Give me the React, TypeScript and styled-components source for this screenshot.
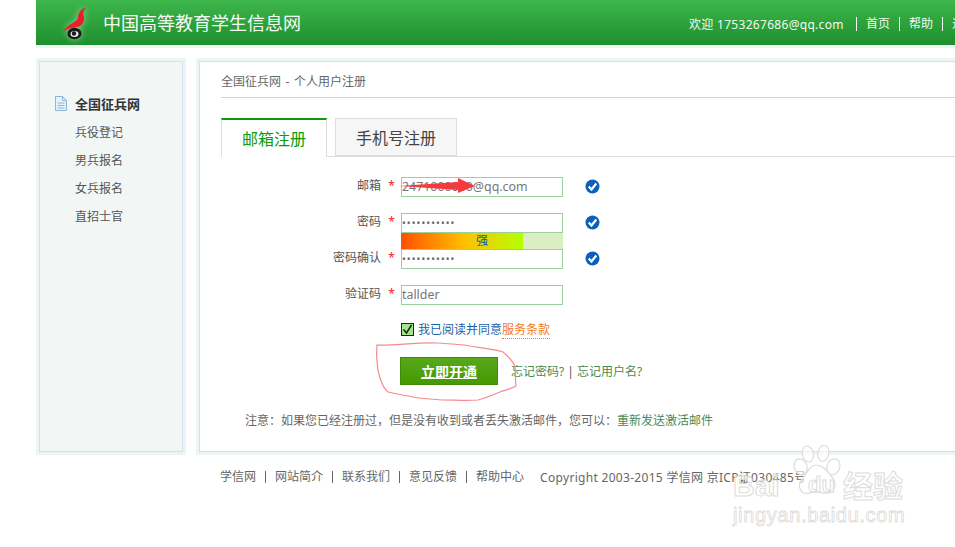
import React from "react";
import styled, { createGlobalStyle } from "styled-components";

const cjk = `"Noto Sans", "Noto Sans CJK SC", sans-serif`;

const Global = createGlobalStyle`
  html, body { margin: 0; padding: 0; background: #fff; overflow: hidden; width: 955px; height: 547px; }
  body { font-family: ${cjk}; font-size: 12px; color: #555; }
  * { box-sizing: border-box; }
`;

const Page = styled.div`
  position: relative;
  width: 955px;
  height: 547px;
  overflow: hidden;
`;
const Wrap = styled.div`
  width: 1040px;
  margin-left: 36px;
  display: flex;
  flex-direction: column;
`;
const Header = styled.header`
  height: 48px;
  border-bottom: 3px solid #eff6f3;
  background: linear-gradient(#3db64c, #1e8f2d);
  display: flex;
  align-items: center;
  padding-left: 25px;
  color: #fff;
`;
const Logo = styled.svg`
  width: 28px;
  height: 34px;
  flex: none;
  filter: drop-shadow(0 0 3px rgba(255, 255, 255, 0.5));
`;
const SiteName = styled.div`
  font-size: 18px;
  line-height: 24px;
  margin-left: 14px;
  padding-top: 1px;
  width: 586px;
  flex: none;
  color: #f4fbf4;
`;
const UserNav = styled.nav`
  display: flex;
  align-items: center;
  padding-top: 3px;
  font-size: 12px;
  white-space: nowrap;
  color: #f2faf2;
`;
const Welcome = styled.span`
  width: 167px;
  letter-spacing: 0.3px;
  flex: none;
`;
const NavLink = styled.a`
  border-left: 1px solid #f2faf2;
  height: 14px;
  line-height: 14px;
  padding: 0 9px;
  width: 43px;
  flex: none;
`;
const Columns = styled.div`
  display: flex;
  gap: 10px;
  margin-top: 10px;
  height: 397px;
`;
const Side = styled.aside`
  width: 150px;
  flex: none;
  border: 3px solid #edf5f2;
  outline: 1px solid #d6e0ea;
  outline-offset: -4px;
  background: #f2f7f5;
  padding: 32px 0 0 16px;
`;
const SideTitle = styled.div`
  display: flex;
  align-items: center;
  height: 20px;
  font-size: 13px;
  font-weight: 700;
  color: #333;
  gap: 8px;
`;
const SideList = styled.ul`
  list-style: none;
  margin: 6px 0 0 20px;
  padding: 0;
`;
const SideItem = styled.li`
  height: 28px;
  line-height: 28px;
  font-size: 12px;
  color: #555;
`;
const Main = styled.main`
  flex: 1;
  border: 3px solid #edf5f2;
  outline: 1px solid #d6e0ea;
  outline-offset: -4px;
  padding: 10px 0 0 22px;
  background: #fff;
`;
const Crumb = styled.div`
  height: 27px;
  line-height: 21px;
  font-size: 12px;
  word-spacing: 1.5px;
  color: #666;
  border-bottom: 1px solid #c9d8cd;
`;
const Tabs = styled.div`
  display: flex;
  gap: 8px;
  margin-top: 20px;
  height: 39px;
  border-bottom: 1px solid #ddd;
`;
const Tab = styled.div<{ $active?: boolean }>`
  width: ${(p) => (p.$active ? "106px" : "122px")};
  height: ${(p) => (p.$active ? "39px" : "38px")};
  border: 1px solid #ddd;
  border-top: ${(p) => (p.$active ? "2px solid #0a9b0a" : "1px solid #ddd")};
  border-bottom: ${(p) => (p.$active ? "none" : "1px solid #ddd")};
  background: ${(p) => (p.$active ? "#fff" : "#f6f6f6")};
  color: ${(p) => (p.$active ? "#0a9b0a" : "#444")};
  font-size: 16px;
  line-height: 38px;
  text-align: center;
`;
const Form = styled.div`
  margin-top: 20px;
  display: flex;
  flex-direction: column;
  gap: 16px;
`;
const Row = styled.div`
  position: relative;
  display: flex;
  align-items: center;
  height: 20px;
`;
const Label = styled.label`
  width: 160px;
  flex: none;
  padding-bottom: 4px;
  text-align: right;
  font-size: 12px;
  color: #555;
`;
const Star = styled.span`
  width: 20px;
  flex: none;
  padding: 0 0 3px 1px;
  text-align: center;
  color: #f22;
  font-size: 12px;
`;
const Field = styled.input`
  width: 162px;
  height: 20px;
  flex: none;
  border: 1px solid #9ad09c;
  padding: 0 0 2px;
  font-family: ${cjk};
  font-size: 12.4px;
  color: #777;
  background: #fff;
  outline: none;
`;
const Dots = styled(Field)`
  font-size: 10px;
  letter-spacing: 1.1px;
  padding-bottom: 0;
  color: #666;
`;
const Check = styled.svg`
  width: 15px;
  height: 15px;
  margin: 0 0 2px 22px;
  flex: none;
`;
const Strength = styled.div`
  position: absolute;
  left: 180px;
  top: 20px;
  width: 162px;
  height: 16px;
  background:
    linear-gradient(90deg, #ff5000, #ffc000 52%, #b4ff00) left top / 122px 100% no-repeat,
    #dbedc2;
  color: #0a4fc0;
  font-size: 12px;
  line-height: 16px;
  text-align: center;
`;
const Agree = styled.div`
  margin: 17px 0 0 180px;
  display: flex;
  align-items: center;
  height: 14px;
  gap: 4px;
  color: #1b5fa8;
  font-size: 12px;
`;
const Box = styled.span`
  width: 13px;
  height: 13px;
  flex: none;
  border: 1px solid #222;
  background: #9fe58a;
  display: flex;
`;
const Terms = styled.a`
  color: #f27a1a;
  border-bottom: 1px dotted #f27a1a;
  line-height: 14px;
  height: 17px;
  padding-top: 1px;
`;
const Actions = styled.div`
  margin: 21px 0 0 179px;
  display: flex;
  align-items: center;
  height: 28px;
`;
const Submit = styled.button`
  width: 98px;
  height: 28px;
  border: 1px solid #3f8a06;
  background: linear-gradient(#58a81c, #459a00);
  color: #fff;
  font-family: ${cjk};
  font-weight: 700;
  font-size: 14px;
  text-decoration: underline;
  padding: 0;
`;
const Links = styled.div`
  margin-left: 13px;
  font-size: 12px;
  color: #555;
  white-space: nowrap;
`;
const GreenLink = styled.a`
  color: #4a8a55;
`;
const Note = styled.div`
  margin: 27px 0 0 24px;
  font-size: 12px;
  line-height: 18px;
  white-space: nowrap;
  color: #666;
`;
const Footer = styled.footer`
  margin: 13px 0 0 184px;
  display: flex;
  align-items: center;
  height: 18px;
  font-size: 12px;
  color: #666;
  white-space: nowrap;
`;
const FooterLink = styled.a`
  padding: 0 9px;
  line-height: 12px;
  height: 12px;
  display: block;
  &:first-child { padding-left: 0; }
  & + & { border-left: 1px solid #666; }
`;
const Copyright = styled.span`
  margin-left: 7px;
  letter-spacing: 0.3px;
`;
const Scribble = styled.svg`
  position: absolute;
  left: 0;
  top: 0;
  width: 955px;
  height: 547px;
  pointer-events: none;
`;
const Watermark = styled.div`
  position: absolute;
  left: 728px;
  top: 442px;
  width: 180px;
  height: 90px;
  pointer-events: none;
`;
const WmBrand = styled.span`
  position: absolute;
  left: 5px;
  top: 26px;
  font: 700 30px/36px "Liberation Sans", sans-serif;
  color: rgba(255, 255, 255, 0.6);
  -webkit-text-stroke: 1px #dcdcdc;
`;
const WmDu = styled.span`
  position: absolute;
  left: 80px;
  top: 31px;
  font: 700 22px/24px "Liberation Sans", sans-serif;
  color: rgba(255, 255, 255, 0.6);
  -webkit-text-stroke: 1px #dcdcdc;
`;
const WmCn = styled.span`
  position: absolute;
  left: 115px;
  top: 24px;
  font: 700 30px/36px "Noto Sans CJK SC", sans-serif;
  color: rgba(255, 255, 255, 0.6);
  -webkit-text-stroke: 1px #dcdcdc;
  white-space: nowrap;
`;
const WmUrl = styled.span`
  position: absolute;
  left: 5px;
  top: 61px;
  font: 400 20px/24px "Liberation Sans", sans-serif;
  letter-spacing: 0.65px;
  color: rgba(255, 255, 255, 0.6);
  -webkit-text-stroke: 0.8px #dcdcdc;
  white-space: nowrap;
`;
const WmPaw = styled.svg`
  position: absolute;
  left: 64px;
  top: 3px;
  width: 50px;
  height: 50px;
`;

const CheckIcon = () => (
  <Check viewBox="0 0 15 15">
    <circle cx="7.5" cy="7.5" r="7" fill="#0a60bd" />
    <path d="M3.8 7.5l2.7 3 4.8-6" fill="none" stroke="#fff" strokeWidth="2.2" />
  </Check>
);

export default function App() {
  return (
    <Page>
      <Global />
      <Wrap>
        <Header>
          <Logo viewBox="0 0 28 34">
            <path d="M25 1.5C20 3 17.5 6 17 11C17 16 8 17 2 25.5C8 21.5 14 22 18 20.5C23 18 24 13 22.5 9C22 6 23 4 25 1.5z" fill="#e8202a" />
            <ellipse cx="13.5" cy="27.5" rx="7" ry="5.8" fill="#1a1a1a" />
            <ellipse cx="13.5" cy="28" rx="4" ry="3" fill="#eee" />
            <circle cx="13" cy="27.5" r="2.2" fill="#1a1a1a" />
          </Logo>
          <SiteName>中国高等教育学生信息网</SiteName>
          <UserNav>
            <Welcome>欢迎 1753267686@qq.com</Welcome>
            <NavLink>首页</NavLink>
            <NavLink>帮助</NavLink>
            <NavLink>退出</NavLink>
          </UserNav>
        </Header>
        <Columns>
          <Side>
            <SideTitle>
              <svg width="12" height="15" viewBox="0 0 12 15">
                <path d="M.5.5h7l4 4v10H.5z" fill="#e8f1f6" stroke="#8ab8d8" />
                <path d="M7.5.5v4h4M2.5 7h7M2.5 9.5h7M2.5 12h7" fill="none" stroke="#8ab8d8" />
              </svg>
              全国征兵网
            </SideTitle>
            <SideList>
              <SideItem>兵役登记</SideItem>
              <SideItem>男兵报名</SideItem>
              <SideItem>女兵报名</SideItem>
              <SideItem>直招士官</SideItem>
            </SideList>
          </Side>
          <Main>
            <Crumb>全国征兵网 - 个人用户注册</Crumb>
            <Tabs>
              <Tab $active>邮箱注册</Tab>
              <Tab>手机号注册</Tab>
            </Tabs>
            <Form>
              <Row>
                <Label>邮箱</Label>
                <Star>*</Star>
                <Field readOnly value="2471000000@qq.com" />
                <CheckIcon />
              </Row>
              <Row>
                <Label>密码</Label>
                <Star>*</Star>
                <Dots readOnly value="•••••••••••" />
                <CheckIcon />
                <Strength>强</Strength>
              </Row>
              <Row>
                <Label>密码确认</Label>
                <Star>*</Star>
                <Dots readOnly value="•••••••••••" />
                <CheckIcon />
              </Row>
              <Row>
                <Label>验证码</Label>
                <Star>*</Star>
                <Field readOnly value="tallder" />
              </Row>
            </Form>
            <Agree>
              <Box>
                <svg width="11" height="11" viewBox="0 0 11 11">
                  <path d="M1.5 5.5l3 3.5 5-8" fill="none" stroke="#222" strokeWidth="1.6" />
                </svg>
              </Box>
              <span>
                我已阅读并同意<Terms>服务条款</Terms>
              </span>
            </Agree>
            <Actions>
              <Submit>立即开通</Submit>
              <Links>
                <GreenLink>忘记密码?</GreenLink> | <GreenLink>忘记用户名?</GreenLink>
              </Links>
            </Actions>
            <Note>
              注意：如果您已经注册过，但是没有收到或者丢失激活邮件，您可以：<GreenLink>重新发送激活邮件</GreenLink>
            </Note>
          </Main>
        </Columns>
        <Footer>
          <FooterLink>学信网</FooterLink>
          <FooterLink>网站简介</FooterLink>
          <FooterLink>联系我们</FooterLink>
          <FooterLink>意见反馈</FooterLink>
          <FooterLink>帮助中心</FooterLink>
          <Copyright>Copyright 2003-2015 学信网 京ICP证030485号</Copyright>
        </Footer>
      </Wrap>
      <Scribble viewBox="0 0 955 547">
        <path d="M399 186L458 182L458 178L475 186L458 193L458 190z" fill="#f53a3e" />
        <path
          d="M377 345c15 1 40-3 60-2 12 1 23 1 33 3 12 2 24 3 33 6 6 5 11 11 12 15 1 6 0 13 1 19-5 3-11 4-16 6-7 3-14 6-22 8-11 1-24 0-35 0-11-1-20-1-30-3-9-2-17-3-25-5-5-4-6-9-8-14-2-6-3-12-3-18-1-5 0-10 0-15z"
          fill="none"
          stroke="#f58a90"
          strokeWidth="1.2"
        />
      </Scribble>
      <Watermark>
        <WmPaw viewBox="0 0 52 55" fill="rgba(255,255,255,0.6)" stroke="#dcdcdc" strokeWidth="1.3">
          <ellipse cx="16" cy="10" rx="6" ry="9" transform="rotate(-10 16 10)" />
          <ellipse cx="33" cy="9" rx="6" ry="9" transform="rotate(10 33 9)" />
          <ellipse cx="8" cy="24" rx="7" ry="9" transform="rotate(-20 8 24)" />
          <ellipse cx="44" cy="24" rx="7" ry="9" transform="rotate(20 44 24)" />
          <path d="M25 22c8 0 12 7 18 14 6 8 1 18-8 17-5-1-12-2-18 0-9 2-13-8-8-15 6-7 9-16 16-16z" />
        </WmPaw>
        <WmBrand>Bai</WmBrand>
        <WmDu>du</WmDu>
        <WmCn>经验</WmCn>
        <WmUrl>jingyan.baidu.com</WmUrl>
      </Watermark>
    </Page>
  );
}
